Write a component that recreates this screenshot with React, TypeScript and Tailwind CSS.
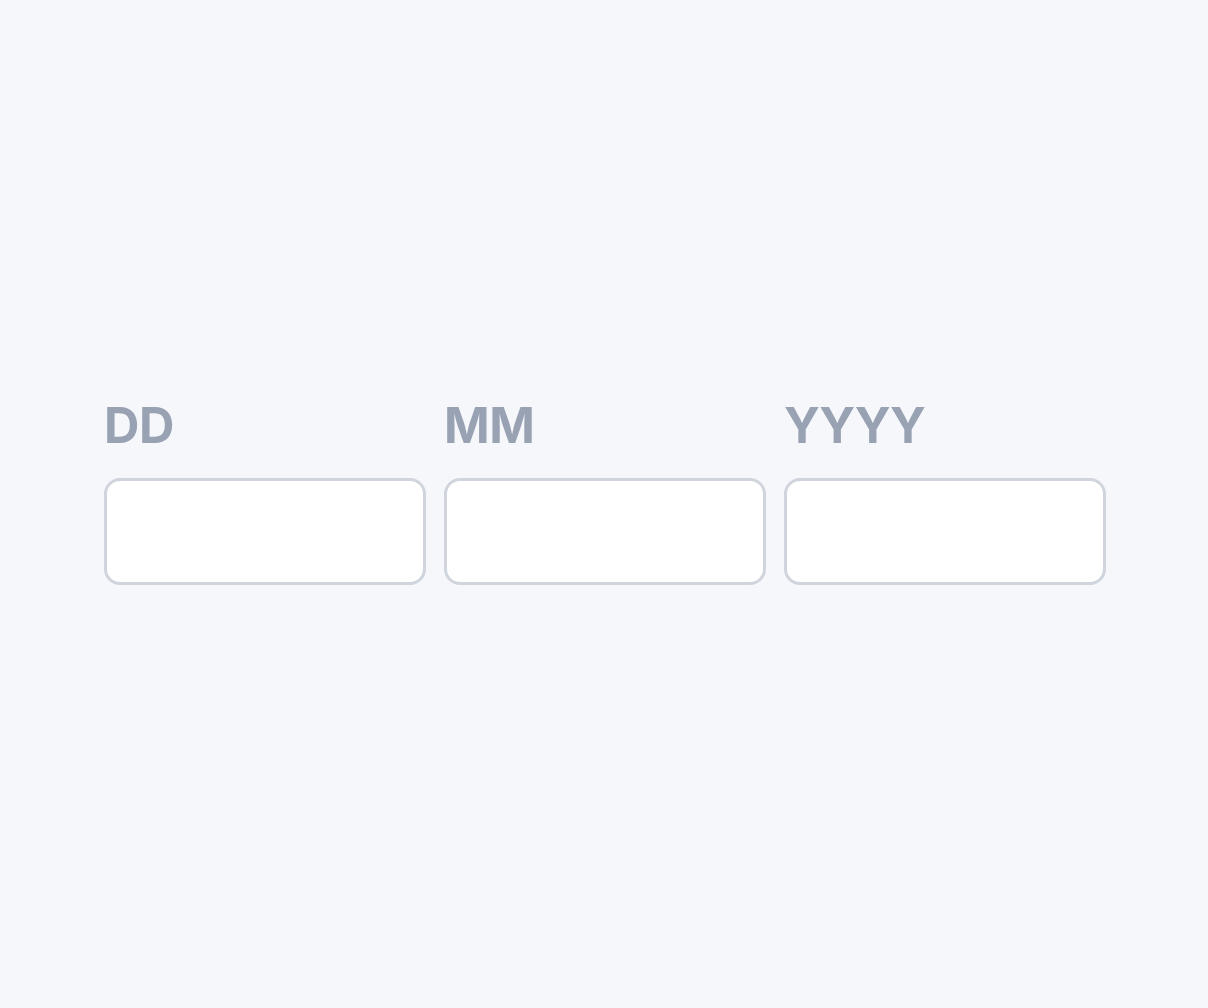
import { useState } from 'react'

const FIELDS = [
  { id: 'day', label: 'DD', max: 2 },
  { id: 'month', label: 'MM', max: 2 },
  { id: 'year', label: 'YYYY', max: 4 },
]

function DateField({ label, max }: { label: string; max: number }) {
  const [value, setValue] = useState('')

  return (
    <label className="flex flex-col">
      <span className="text-[49px] leading-[49px] font-bold tracking-[-0.5px] text-[#98a2b3] mb-[28px]">
        {label}
      </span>
      <input
        type="text"
        inputMode="numeric"
        maxLength={max}
        value={value}
        onChange={(e) => setValue(e.target.value.replace(/\D/g, ''))}
        className="h-[107px] w-full rounded-2xl border-[3px] border-[#d0d5dd] bg-white px-6 text-[40px] text-gray-700 outline-none"
      />
    </label>
  )
}

export default function App() {
  return (
    <div
      className="min-h-screen bg-[#f5f7fb] pt-[401px]"
      style={{ fontFamily: 'Inter, "Liberation Sans", sans-serif' }}
    >
      <div className="ml-[104px] grid grid-cols-[repeat(3,322px)] gap-[18px]">
        {FIELDS.map((f) => (
          <DateField key={f.id} label={f.label} max={f.max} />
        ))}
      </div>
    </div>
  )
}
